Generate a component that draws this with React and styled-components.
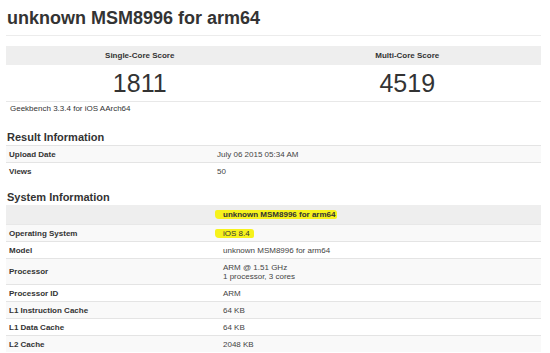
import React from 'react'
import styled, { createGlobalStyle } from 'styled-components'

const GlobalStyle = createGlobalStyle`
  html, body {
    margin: 0;
    padding: 0;
    background: #fff;
  }
  body {
    font-family: "Liberation Sans", Arial, sans-serif;
    color: #333;
  }
`

const resultRows = [
  { label: 'Upload Date', value: 'July 06 2015 05:34 AM' },
  { label: 'Views', value: '50' },
]

const systemRows = [
  { label: 'Operating System', value: 'iOS 8.4', marked: true },
  { label: 'Model', value: 'unknown MSM8996 for arm64' },
  { label: 'Processor', value: ['ARM @ 1.51 GHz', '1 processor, 3 cores'] },
  { label: 'Processor ID', value: 'ARM' },
  { label: 'L1 Instruction Cache', value: '64 KB' },
  { label: 'L1 Data Cache', value: '64 KB' },
  { label: 'L2 Cache', value: '2048 KB' },
]

const App = () => {
  return (
    <Page>
      <GlobalStyle />
      <Title>unknown MSM8996 for arm64</Title>

      <ScoreTable>
        <thead>
          <tr>
            <th>Single-Core Score</th>
            <th>Multi-Core Score</th>
          </tr>
        </thead>
        <tbody>
          <tr>
            <td>1811</td>
            <td>4519</td>
          </tr>
        </tbody>
      </ScoreTable>
      <Note>Geekbench 3.3.4 for iOS AArch64</Note>

      <SectionTitle $top={17}>Result Information</SectionTitle>
      <InfoTable $labelWidth={208}>
        <tbody>
          {resultRows.map((row) => (
            <tr key={row.label}>
              <th>{row.label}</th>
              <td>{row.value}</td>
            </tr>
          ))}
        </tbody>
      </InfoTable>

      <SectionTitle $top={12}>System Information</SectionTitle>
      <InfoTable $labelWidth={214}>
        <thead>
          <tr>
            <th></th>
            <th>
              <Marker $left={8} $right={2}>unknown MSM8996 for arm64</Marker>
            </th>
          </tr>
        </thead>
        <tbody>
          {systemRows.map((row) => (
            <tr key={row.label}>
              <th>{row.label}</th>
              <td>
                {row.marked ? (
                  <Marker $left={8} $right={4}>{row.value}</Marker>
                ) : Array.isArray(row.value) ? (
                  row.value.map((line) => <Line key={line}>{line}</Line>)
                ) : (
                  row.value
                )}
              </td>
            </tr>
          ))}
        </tbody>
      </InfoTable>
    </Page>
  )
}

const Page = styled.main`
  width: 535px;
  margin-left: 6px;
`

const Title = styled.h1`
  margin: 0;
  padding: 8px 0 7px 1px;
  font-size: 18px;
  line-height: 20px;
  font-weight: bold;
  color: #333;
  border-bottom: 1px solid #ececec;
`

const ScoreTable = styled.table`
  width: 100%;
  margin-top: 10px;
  border-collapse: collapse;
  table-layout: fixed;

  th {
    background: #eee;
    font-size: 8px;
    line-height: 19px;
    font-weight: bold;
    color: #333;
    padding: 0;
  }

  td {
    text-align: center;
    font-size: 25px;
    line-height: 36px;
    color: #333;
    padding: 0;
    border-bottom: 1px solid #e8e8e8;
  }
`

const Note = styled.p`
  margin: 2px 0 0;
  padding-left: 4px;
  font-size: 8px;
  line-height: 10px;
  color: #333;
`

const SectionTitle = styled.h2`
  margin: ${(p) => p.$top}px 0 1px;
  padding-left: 1px;
  font-size: 11px;
  line-height: 13px;
  font-weight: bold;
  color: #333;
`

const InfoTable = styled.table`
  width: 100%;
  border-collapse: collapse;
  table-layout: fixed;
  font-size: 8px;
  line-height: 9px;

  th, td {
    padding: 3.5px 3px;
    text-align: left;
    vertical-align: middle;
  }

  th {
    font-weight: bold;
    color: #333;
  }

  th:first-child {
    width: ${(p) => p.$labelWidth - 6}px;
  }

  td {
    font-weight: normal;
    color: #444;
  }

  thead th {
    background: #eee;
    padding-top: 5px;
    padding-bottom: 5px;
  }

  tbody tr {
    border-top: 1px solid #e4e4e4;
  }

  thead + tbody tr:first-child {
    border-top-color: #e8e8e8;
  }

  tbody tr:nth-child(odd) {
    background: #f9f9f9;
  }
`

const Marker = styled.span`
  display: inline-block;
  margin-left: -${(p) => p.$left}px;
  padding: 0 ${(p) => p.$right}px 0 ${(p) => p.$left}px;
  background: #f6f21c;
  border-radius: 2px 3px 2px 4px;
  color: #333;
`

const Line = styled.span`
  display: block;
`

export default App
